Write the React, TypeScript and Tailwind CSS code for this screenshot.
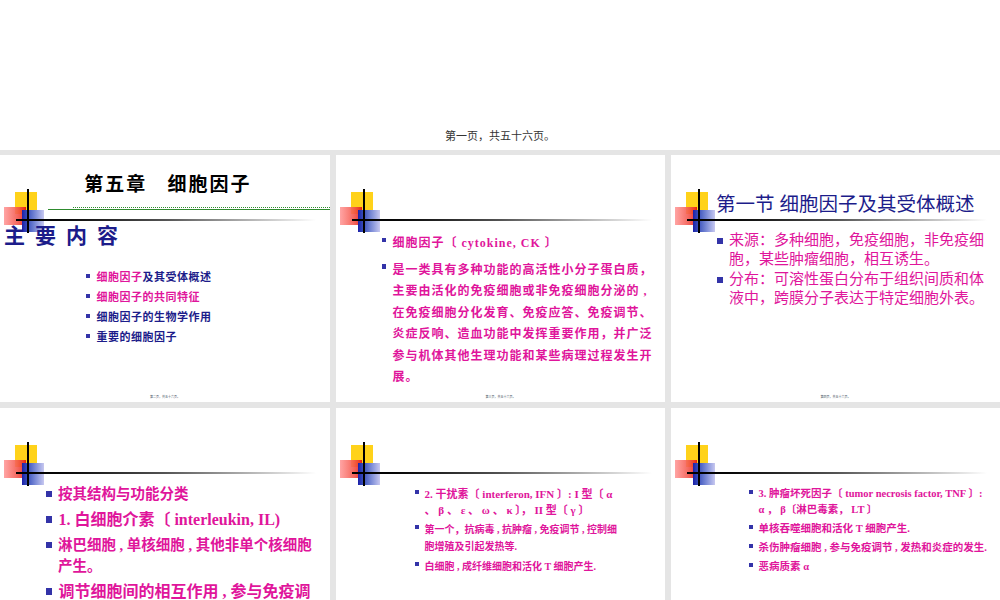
import React from "react";

const serif = { fontFamily: '"Liberation Serif","Noto Sans CJK SC",serif' };
const M = "text-[#e0159b]";
const N = "text-[#1c1c8a]";

function Logo() {
  return (
    <div className="absolute left-0 top-0 w-full h-[80px] pointer-events-none">
      <div className="absolute left-[15px] top-[37px] w-[22px] h-[22px] bg-[#ffd21a]" />
      <div className="absolute left-[4px] top-[52px] w-[22px] h-[18px] bg-gradient-to-r from-[#ff9a9a] to-[#e80000] opacity-90" />
      <div className="absolute left-[22px] top-[55px] w-[22px] h-[22px] bg-gradient-to-r from-[#1c1ca8] to-[#c8c8f0]" />
      <div className="absolute left-[27px] top-[34px] w-[1.5px] h-[44px] bg-black" />
      <div className="absolute left-[16px] top-[64px] w-[300px] h-[2px] bg-gradient-to-r from-black via-[#555] to-transparent" />
    </div>
  );
}

function Slide({ children, footer = "第二页，共五十六页。" }: { children?: React.ReactNode; footer?: string }) {
  return (
    <div className="relative bg-white h-[247px] overflow-hidden" style={serif}>
      <Logo />
      {children}
      <div className="absolute bottom-[3px] w-full text-center text-[3px] text-gray-600">{footer}</div>
    </div>
  );
}

function B({ c, size, text, cls = "" }: { c: string; size: number; text: React.ReactNode; cls?: string }) {
  return (
    <div className={`flex ${cls}`}>
      <span className="shrink-0 bg-[#3333a8] mr-[6px]" style={{ width: size * 0.4, height: size * 0.4, marginTop: size * 0.45 }} />
      <span className={c}>{text}</span>
    </div>
  );
}

export default function App() {
  return (
    <div className="w-[1000px] h-[600px] bg-[#e5e5e5] overflow-hidden" style={serif}>
      <div className="h-[150px] bg-white flex items-end justify-center pb-[7px]">
        <span className="text-[11px] text-[#333]" style={{ fontFamily: '"Noto Sans CJK SC",sans-serif' }}>第一页，共五十六页。</span>
      </div>
      <div className="grid grid-cols-[330px_329px_329px] gap-x-[6px] gap-y-[6px] pt-[5px]">
        <Slide footer="第二页，共五十六页。">
          <div className="absolute left-0 right-0 top-[16px] text-center text-[19px] font-bold pl-[6px] tracking-[2px]">第五章&nbsp;&nbsp;&nbsp;细胞因子</div>
          <div className="absolute left-[73px] right-0 top-[52px] border-t border-dotted border-[#2e8b2e]" />
          <div className="absolute left-[48px] right-0 top-[54px] h-px bg-[#2e8b2e]" />
          <div className={`absolute left-[4px] top-[66px] text-[21px] font-bold tracking-[10px] ${N}`}>主要内容</div>
          <div className="absolute left-[86px] top-[114px] text-[11px] font-bold flex flex-col gap-[4px] leading-[16px] tracking-[0.5px]">
            <B c={N} size={11} text={<><span className={M}>细胞因子</span>及其受体概述</>} />
            <B c={M} size={11} text="细胞因子的共同特征" />
            <B c={N} size={11} text="细胞因子的生物学作用" />
            <B c={N} size={11} text="重要的细胞因子" />
          </div>
        </Slide>
        <Slide footer="第三页，共五十六页。">
          <div className="absolute left-[46px] w-[274px] top-[78px] text-[12px] tracking-[1px] font-bold flex flex-col gap-[5px] leading-[21.5px]">
            <B c={M} size={11} text="细胞因子〔 cytokine, CK 〕" />
            <B c={M} size={11} text="是一类具有多种功能的高活性小分子蛋白质，主要由活化的免疫细胞或非免疫细胞分泌的 , 在免疫细胞分化发育、免疫应答、免疫调节、炎症反响、造血功能中发挥重要作用，并广泛参与机体其他生理功能和某些病理过程发生开展。" />
          </div>
        </Slide>
        <Slide footer="第四页，共五十六页。">
          <div className={`absolute left-[45px] top-[35px] text-[19.5px] ${N}`}>第一节&nbsp;细胞因子及其受体概述</div>
          <div className="absolute left-[46px] right-[10px] top-[76px] text-[15px] flex flex-col gap-[1px] leading-[19px]">
            <B c={M} size={15} text="来源：多种细胞，免疫细胞，非免疫细胞，某些肿瘤细胞，相互诱生。" />
            <B c={M} size={15} text="分布：可溶性蛋白分布于组织间质和体液中，跨膜分子表达于特定细胞外表。" />
          </div>
        </Slide>
        <Slide>
          <div className="absolute left-[46px] right-[8px] top-[76px] text-[14.5px] font-bold flex flex-col gap-[4px] leading-[21px]">
            <B c={M} size={15} text="按其结构与功能分类" />
            <B c={M} size={16} text={<span className="text-[16px]">1. 白细胞介素〔 interleukin, IL)</span>} />
            <B c={M} size={15} text="淋巴细胞 , 单核细胞 , 其他非单个核细胞产生。" />
            <B c={M} size={16} text={<span className="text-[16px]">调节细胞间的相互作用 , 参与免疫调节 , 造血及炎性反应。</span>} />
          </div>
        </Slide>
        <Slide>
          <div className="absolute left-[79px] w-[210px] top-[78px] text-[11px] font-bold flex flex-col gap-[3px] leading-[16px]">
            <B c={M} size={9} text="2. 干扰素〔 interferon, IFN 〕:  I 型〔 α 、 β 、 ε 、 ω 、 κ 〕， II 型〔 γ 〕" />
            <B c={M} size={9} text={<span className="text-[10px]">第一个，抗病毒 , 抗肿瘤 , 免疫调节 , 控制细胞增殖及引起发热等.</span>} />
            <B c={M} size={9} text={<span className="text-[10px]">白细胞 , 成纤维细胞和活化 T 细胞产生.</span>} />
          </div>
        </Slide>
        <Slide>
          <div className="absolute left-[78px] right-[10px] top-[78px] text-[10.5px] font-bold flex flex-col gap-[3px] leading-[16px]">
            <B c={M} size={9} text="3. 肿瘤坏死因子〔 tumor necrosis factor, TNF 〕:  α ， β〔淋巴毒素， LT 〕" />
            <B c={M} size={9} text={<span className="text-[10.5px]">单核吞噬细胞和活化 T 细胞产生.</span>} />
            <B c={M} size={9} text={<span className="text-[10.5px]">杀伤肿瘤细胞 , 参与免疫调节 , 发热和炎症的发生.</span>} />
            <B c={M} size={9} text={<span className="text-[10.5px]">恶病质素 α</span>} />
          </div>
        </Slide>
      </div>
    </div>
  );
}
